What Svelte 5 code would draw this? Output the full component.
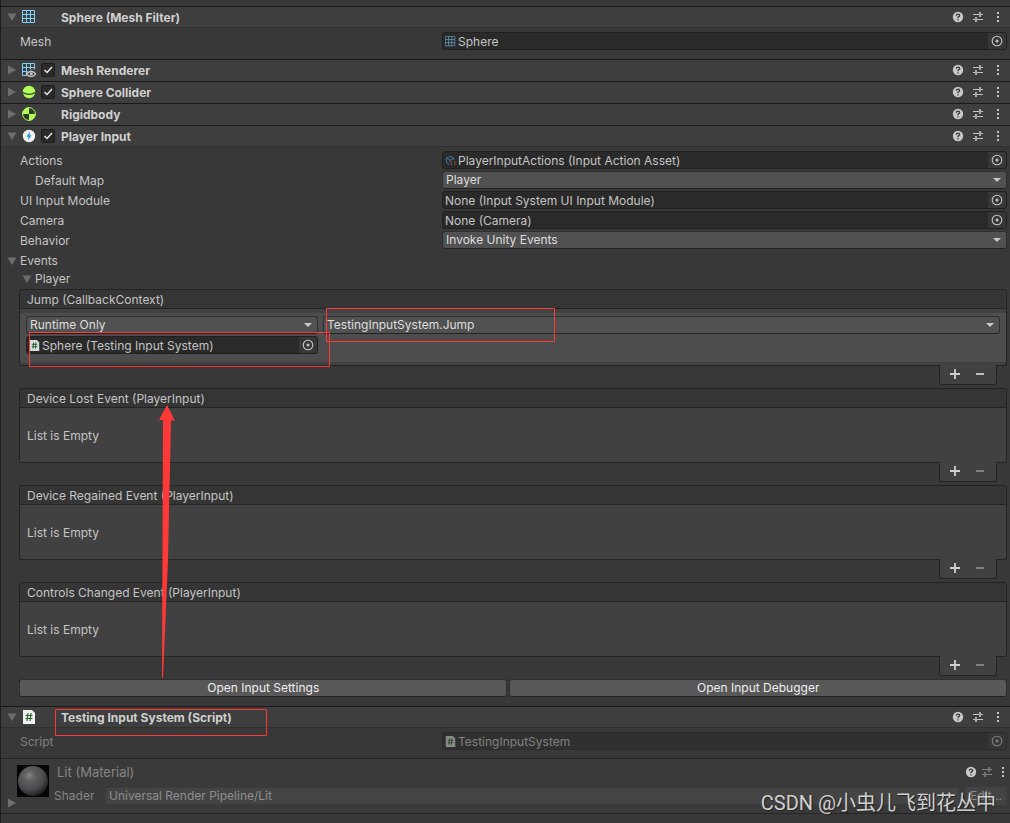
<script>
  const openSections = [
    { title: 'Mesh Renderer', icon: 'renderer', enabled: true },
    { title: 'Sphere Collider', icon: 'collider', enabled: true },
    { title: 'Rigidbody', icon: 'rigidbody', enabled: null }
  ];
  const fields = [
    { id: 'actions', label: 'Actions', kind: 'object', icon: 'asset', value: 'PlayerInputActions (Input Action Asset)' },
    { id: 'map', label: 'Default Map', kind: 'select', value: 'Player', indent: true },
    { id: 'module', label: 'UI Input Module', kind: 'object', value: 'None (Input System UI Input Module)' },
    { id: 'camera', label: 'Camera', kind: 'object', value: 'None (Camera)' },
    { id: 'behavior', label: 'Behavior', kind: 'select', value: 'Invoke Unity Events' }
  ];
  const emptyEvents = [
    'Device Lost Event (PlayerInput)',
    'Device Regained Event (PlayerInput)',
    'Controls Changed Event (PlayerInput)'
  ];
</script>

{#snippet fold(name, open)}
  <button class="fold" aria-label="Toggle {name}" aria-expanded={open}>
    <svg width="10" height="10" viewBox="0 0 10 10">
      <path d={open ? 'M0.5 1.5H9.5L5 9Z' : 'M1 0.5V9.5L9 5Z'} fill="#6e6e6e" />
    </svg>
  </button>
{/snippet}

{#snippet icon(kind)}
  {#if kind === 'mesh'}
    <svg width="14" height="14" viewBox="0 0 14 14"><path d="M.5.5h12v12H.5zM4.500.5v12M8.500.5v12M.5 4.500h12M.5 8.500h12" fill="none" stroke="#7fd3fb" /></svg>
  {:else if kind === 'renderer'}
    <svg width="14" height="14" viewBox="0 0 14 14">
      <path d="M4.500 12.500H.5V.5h12v6M4.500.5v12M8.500.5v6M.5 4.500h12M.5 8.500h5" fill="none" stroke="#7fd3fb" />
      <path d="M4.500 11Q9 5.500 13.800 11Q9 16 4.500 11Z" fill="#3e3e3e" stroke="#c4c4c4" stroke-width="1.300" />
      <circle cx="9.200" cy="10.800" r="1.500" fill="#c4c4c4" />
    </svg>
  {:else if kind === 'collider'}
    <svg width="14" height="14" viewBox="0 0 14 14"><circle cx="7" cy="7" r="6.200" fill="#b1fd59" /><path d="M.8 7.500Q7 11.200 13.200 7.500" fill="none" stroke="#34491f" stroke-width="1.200" /></svg>
  {:else if kind === 'rigidbody'}
    <svg width="14" height="14" viewBox="0 0 14 14"><circle cx="7" cy="7" r="6.400" fill="#303a28" stroke="#b1fd59" stroke-width="1" /><path d="M7 7V.5A6.500 6.500 0 0 0 .5 7ZM7 7V13.500A6.500 6.500 0 0 0 13.500 7Z" fill="#b1fd59" /></svg>
  {:else if kind === 'input'}
    <svg width="14" height="14" viewBox="0 0 14 14"><circle cx="7" cy="7" r="6.200" fill="#f2f2f2" /><path d="M8 2.500L4.500 7.800H6.500L6 11.500L9.500 6.200H7.500Z" fill="#1595cf" /></svg>
  {:else if kind === 'script'}
    <svg width="14" height="14" viewBox="0 0 14 14"><path d="M1 0H10L13 3V14H1Z" fill="#f0f0f0" /><path d="M6 3L5 11M9 3L8 11M3.500 5.500H10.500M3.500 8.500H10.500" stroke="#23672c" stroke-width="1.200" /></svg>
  {:else if kind === 'asset'}
    <svg width="12" height="12" viewBox="0 0 12 12">
      <path d="M5 10.500L1.500 8.500V3.500L5.500 1.500L9.500 3.500V5.500M1.500 3.500L5.500 5.500L9.500 3.500M5.500 5.500V8" fill="none" stroke="#3b7f9e" />
      <path d="M8 6.500Q7 6.500 7 7.500V8L6.500 8.500L7 9V10Q7 11 8 11M10 6.500Q11 6.500 11 7.500V8L11.500 8.500L11 9V10Q11 11 10 11" fill="none" stroke="#a34a30" />
    </svg>
  {/if}
{/snippet}

{#snippet tools(title, dim)}
  <span class="tools">
    <button aria-label="Help for {title}"><svg width="12" height="12" viewBox="0 0 12 12"><circle cx="6" cy="6" r="5.200" fill="#c8c8c8" /><path d="M4.300 4.700Q4.300 3.200 6 3.200Q7.700 3.200 7.700 4.600Q7.700 5.500 6 6.100V7.200M6 8.200V9.400" fill="none" stroke="#3a3a3a" stroke-width="1.300" /></svg></button>
    <button aria-label="Presets for {title}" class:dim><svg width="12" height="12" viewBox="0 0 12 12"><path d="M1 3.500H7M9 3.500H11M1 8.500H3M5 8.500H11" stroke="#c4c4c4" /><path d="M8 1V6M4 6V11" stroke="#c4c4c4" stroke-width="1.600" /></svg></button>
    <button aria-label="Menu for {title}"><svg width="12" height="12" viewBox="0 0 12 12"><path d="M5 1h2v2H5zM5 5h2v2H5zM5 9h2v2H5z" fill="#c4c4c4" /></svg></button>
  </span>
{/snippet}

{#snippet header(title, kind, open, enabled)}
  <header class="head" class:open>
    {@render fold(title, open)}
    <span class="icon">{@render icon(kind)}</span>
    <span class="toggle">
      {#if enabled}
        <input type="checkbox" checked aria-label="Enable {title}" />
        <svg width="14" height="14" viewBox="0 0 14 14"><path d="M3.500 7L6 9.500L11 4" fill="none" stroke="#e4e4e4" stroke-width="1.500" /></svg>
      {/if}
    </span>
    <h2>{title}</h2>
    {@render tools(title, false)}
  </header>
{/snippet}

{#snippet objectField(id, value, kind, label)}
  <div class="object">
    {#if kind}<span class="mini {kind}">{@render icon(kind)}</span>{/if}
    <input {id} type="text" readonly {value} aria-label={label} />
    <button aria-label="Pick {value}"><svg width="12" height="12" viewBox="0 0 12 12"><circle cx="6" cy="6" r="4.800" fill="none" stroke="#c4c4c4" stroke-width="1.100" /><circle cx="6" cy="6" r="1.500" fill="#c4c4c4" /></svg></button>
  </div>
{/snippet}

{#snippet selectField(id, value, label)}
  <div class="select">
    <select {id} aria-label={label}><option>{value}</option></select>
    <svg width="10" height="6" viewBox="0 0 10 6"><path d="M1 1H9L5 5Z" fill="#c8c8c8" /></svg>
  </div>
{/snippet}

{#snippet listFooter(title, canRemove)}
  <div class="footer">
    <button aria-label="Add to {title}"><svg width="12" height="12" viewBox="0 0 12 12"><path d="M6 1V11M1 6H11" stroke="#cfcfcf" stroke-width="1.800" /></svg></button>
    <button aria-label="Remove from {title}" class:dim={!canRemove}><svg width="12" height="12" viewBox="0 0 12 12"><path d="M2 6H10" stroke="#cfcfcf" stroke-width="1.800" /></svg></button>
  </div>
{/snippet}

<main>
  <section>
    {@render header('Sphere (Mesh Filter)', 'mesh', true, null)}
    <div class="body mesh-body">
      <div class="row"><label for="mesh">Mesh</label>{@render objectField('mesh', 'Sphere', 'mesh', 'Mesh')}</div>
    </div>
  </section>

  {#each openSections as s}
    <section>{@render header(s.title, s.icon, false, s.enabled)}</section>
  {/each}

  <section>
    {@render header('Player Input', 'input', true, true)}
    <div class="body">
      {#each fields as f}
        <div class="row">
          <label for={f.id} class:indent={f.indent}>{f.label}</label>
          {#if f.kind === 'object'}
            {@render objectField(f.id, f.value, f.icon, f.label)}
          {:else}
            {@render selectField(f.id, f.value, f.label)}
          {/if}
        </div>
      {/each}
      <div class="group">{@render fold('Events', true)}<span>Events</span></div>
      <div class="group nested">{@render fold('Player', true)}<span>Player</span></div>

      <div class="event">
        <h3>Jump (CallbackContext)</h3>
        <div class="calls">
          <div class="call">
            <div class="target">
              {@render selectField('mode', 'Runtime Only', 'Call state')}
              {@render objectField('target', 'Sphere (Testing Input System)', 'script', 'Target')}
            </div>
            {@render selectField('method', 'TestingInputSystem.Jump', 'Method')}
          </div>
        </div>
        {@render listFooter('Jump', true)}
      </div>
      {#each emptyEvents as title}
        <div class="event">
          <h3>{title}</h3>
          <p>List is Empty</p>
          {@render listFooter(title, false)}
        </div>
      {/each}
      <div class="buttons">
        <button>Open Input Settings</button>
        <button>Open Input Debugger</button>
      </div>
    </div>
  </section>

  <section>
    {@render header('Testing Input System (Script)', 'script', true, null)}
    <div class="body mesh-body disabled">
      <div class="row"><label for="script">Script</label>{@render objectField('script', 'TestingInputSystem', 'script', 'Script')}</div>
    </div>
  </section>

  <section class="material">
    <div class="preview">
      <svg width="32" height="32" viewBox="0 0 32 32">
        <defs><radialGradient id="ball" cx="38%" cy="32%" r="68%"><stop offset="0" stop-color="#858688" /><stop offset=".25" stop-color="#606163" /><stop offset=".7" stop-color="#484a4d" /><stop offset="1" stop-color="#252525" /></radialGradient></defs>
        <path d="M0 0H32V32H0Z" fill="#050505" /><circle cx="16" cy="16" r="15" fill="url(#ball)" />
      </svg>
      {@render fold('Lit', false)}
    </div>
    <div class="details">
      <div class="name"><h2>Lit (Material)</h2>{@render tools('Lit', true)}</div>
      <div class="shader">
        <label for="shader">Shader</label>
        {@render selectField('shader', 'Universal Render Pipeline/Lit', 'Shader')}
        <button class="edit">Edit...</button>
      </div>
    </div>
  </section>

  <svg class="marks" width="570" height="740" viewBox="0 0 570 740" aria-hidden="true">
    <g fill="none" stroke="#ff3838"><path d="M326.500 308.500H554.500V341.500H326.500ZM29.500 332.500H329.500V366.500H29.500ZM55.500 709.500H266.500V735.500H55.500Z" /></g>
    <path d="M167 405L175 421L171 420L168 560L163 678H162L163 420L159 420Z" fill="#ff3838" />
  </svg>
  <div class="watermark">CSDN @小虫儿飞到花丛中</div>
</main>

<style>
  :global(body) { margin: 0; background: #383838; }
  main {
    position: relative;
    box-sizing: border-box;
    min-height: 100vh;
    padding-top: 6px;
    border-left: 1px solid #1e1e1e;
    overflow: hidden;
    background: #383838;
    color: #c4c4c4;
    font: 12px/18px Inter, sans-serif;
  }
  main :global(*) { box-sizing: border-box; }
  svg { display: block; flex: none; }
  button, input, select { margin: 0; padding: 0; border: 0; background: none; color: inherit; font: inherit; }
  h2, h3, p { margin: 0; }
  button { display: grid; place-items: center; }
  .head {
    display: flex;
    align-items: center;
    height: 22px;
    padding: 0 6px 1px 5px;
    border-top: 1px solid #1a1a1a;
    background: #3e3e3e;
  }
  .head.open { padding-bottom: 0; border-bottom: 1px solid #303030; }
  .fold { flex: none; width: 12px; height: 12px; }
  .icon { flex: none; width: 14px; margin-left: 4px; }
  .toggle { display: grid; flex: none; width: 14px; margin: 0 6px 0 5px; }
  .toggle > * { grid-area: 1 / 1; }
  .toggle svg { pointer-events: none; }
  .toggle input { appearance: none; width: 14px; height: 14px; border: 1px solid #1c1c1c; border-radius: 2px; background: #2a2a2a; }
  .head h2 { flex: 1; padding-top: 2px; font-size: 12px; line-height: 18px; font-weight: 700; color: #d0d0d0; }
  .tools { display: flex; gap: 8px; }
  .dim { opacity: .5; }
  .body { padding: 4px 3px 9px 19px; }
  .row { display: grid; grid-template-columns: 422fr 565fr; align-items: start; }
  .row label { line-height: 20px; }
  .mesh-body { padding-bottom: 7px; }
  .indent { padding-left: 15px; }
  .object {
    display: flex;
    align-items: center;
    height: 18px;
    min-width: 0;
    padding-left: 2px;
    border: 1px solid #202020;
    border-radius: 3px;
    background: #2a2a2a;
    overflow: hidden;
  }
  .object input { flex: 1; min-width: 0; height: 16px; padding-top: 1px; outline: 0; }
  .object button { flex: none; width: 18px; height: 16px; background: #373737; }
  .mini { flex: none; width: 13px; }
  .mini :global(svg) { width: 11px; height: 11px; }
  .mini.mesh { opacity: .65; }
  .mini.script { opacity: .9; }
  .select { position: relative; display: grid; align-items: center; min-width: 0; height: 18px; }
  .select > * { grid-area: 1 / 1; }
  .select svg { justify-self: end; margin-right: 5px; pointer-events: none; }
  .select select {
    appearance: none;
    width: 100%;
    height: 18px;
    padding-left: 3px;
    border: 1px solid #303030;
    border-bottom-color: #242424;
    border-radius: 3px;
    background: #515151;
    color: #dedede;
    line-height: 16px;
  }
  .group { display: flex; align-items: center; height: 18px; margin: 1px 0 0 -14px; gap: 2px; }
  .group.nested { margin: 0 0 0 1px; }
  .event { margin: 0 0 3px -1px; }
  .nested + .event { margin-top: 1px; }
  .event h3 {
    height: 20px;
    padding-left: 7px;
    border: 1px solid #242424;
    border-radius: 3px 3px 0 0;
    background: #353535;
    font-size: 12px;
    font-weight: 400;
    line-height: 20px;
  }
  .event p, .calls { border: 1px solid #242424; border-top: 0; border-radius: 0 0 3px 3px; background: #414141; }
  .event p { height: 55px; padding: 19px 7px 0; }
  .calls { padding: 4px 0 3px; }
  .call { display: grid; grid-template-columns: 292fr 677fr; gap: 5px; padding: 3px 6px 8px; background: #4d4d4d; }
  .target { display: grid; gap: 2px; min-width: 0; }
  .footer {
    position: relative;
    display: flex;
    gap: 13px;
    width: 58px;
    height: 20px;
    margin: -1px 10px 0 auto;
    padding: 0 9px 2px;
    border: 1px solid #242424;
    border-top: 0;
    border-radius: 0 0 3px 3px;
    background: #414141;
  }
  .footer button { width: 12px; }
  .buttons { display: grid; grid-template-columns: 488fr 497fr; gap: 2px; margin-left: -1px; }
  .buttons button { height: 18px; border: 1px solid #303030; border-bottom-color: #242424; border-radius: 3px; background: #585858; color: #eee; line-height: 16px; }
  .disabled { padding-bottom: 6px; }
  .disabled label, .disabled .object { opacity: .5; }
  .material {
    display: flex;
    gap: 8px;
    height: 56px;
    padding: 6px 3px 0 5px;
    border-top: 1px solid #262626;
    border-bottom: 1px solid #262626;
    background: #3a3a3a;
  }
  .preview { width: 43px; }
  .preview svg { margin-left: auto; }
  .preview .fold svg { margin: 0; }
  .details { flex: 1; min-width: 0; }
  .name { display: flex; align-items: center; height: 14px; }
  .name h2 { flex: 1; font-size: 13px; font-weight: 400; color: #858585; }
  .name .tools { gap: 4px; margin-right: -2px; }
  .shader { display: flex; align-items: center; margin-top: 8px; gap: 5px; color: #858585; }
  .shader label { width: 46px; margin-left: -3px; }
  .shader .select { flex: 1; }
  .shader select, .edit { border-color: #3c3c3c; background: #444; color: #8e8e8e; }
  .shader .select svg { opacity: .4; }
  .edit { width: 42px; height: 18px; border-radius: 3px; }
  .marks { position: absolute; top: 0; left: -1px; pointer-events: none; }
  .watermark {
    position: absolute;
    right: 14px;
    bottom: 5px;
    color: #d0d0d0;
    font: 20px/30px "Liberation Sans Narrow", Roboto, "Noto Sans CJK SC", sans-serif;
    text-shadow: 1px 1px 1px #222;
    white-space: nowrap;
    pointer-events: none;
  }
</style>
